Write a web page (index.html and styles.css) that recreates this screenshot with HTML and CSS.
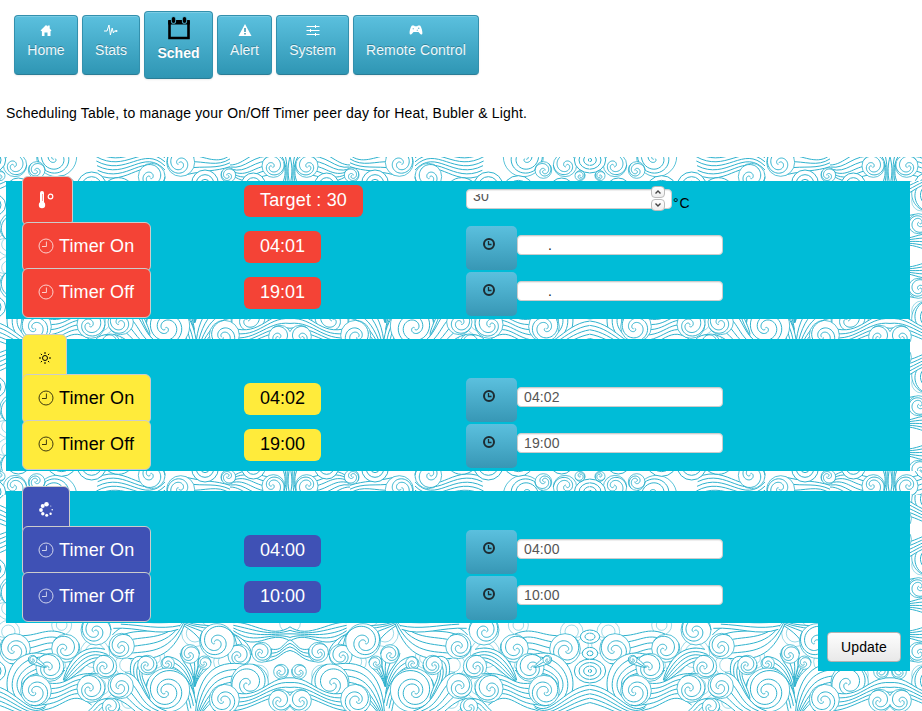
FILE: index.html
```html
<!DOCTYPE html>
<html lang="en">
<head>
<meta charset="utf-8">
<title>Scheduling Table</title>
<link rel="stylesheet" href="styles.css">
</head>
<body>
<svg class="symbols" width="0" height="0" aria-hidden="true">
  <symbol id="clock" viewBox="0 0 16 16"><circle cx="8" cy="8" r="7" fill="none" stroke="currentColor" stroke-width="1"/><path d="M8.4 3.5V8.5H4" fill="none" stroke="currentColor" stroke-width="1"/></symbol>
  <symbol id="time" viewBox="0 0 14 14"><circle cx="7" cy="7" r="5" fill="none" stroke="currentColor" stroke-width="2"/><path d="M6.5 4V7.5H9.5" fill="none" stroke="currentColor" stroke-width="1.3"/></symbol>
</svg>
<nav class="nav">
  <a class="btn home"><svg class="icon" viewBox="0 0 14 12"><path d="M1.500 6.500 7 1l1.700 1.500V1.400h2v3l1.800 2.100-1 .7V12H8.500V8.500h-3V12H2.900V7.200z" fill="currentColor"/></svg><span>Home</span></a>
  <a class="btn stats"><svg class="icon" viewBox="0 0 14 12"><path d="M0 7h3l2-6 1.4 10L8.2 4l1.2 5 1-2H12" fill="none" stroke="currentColor" stroke-width="1"/><circle cx="12.4" cy="7" r="1.1" fill="currentColor"/></svg><span>Stats</span></a>
  <a class="btn sched active"><svg class="icon" viewBox="0 0 24 24"><path d="M2.500 6h19v16h-19z" fill="none" stroke="#000" stroke-width="2.600"/><path d="M1.200 4h21.600v4.500H1.200z" fill="#000"/><path d="M6.500 2.800v2.400M17.500 2.800v2.400" stroke="#49a9c6" stroke-width="5.200" stroke-linecap="round"/><path d="M6.500 2.800v2.400M17.500 2.800v2.400" stroke="#000" stroke-width="3.400" stroke-linecap="round"/></svg><span>Sched</span></a>
  <a class="btn alert"><svg class="icon" viewBox="0 0 14 12"><path d="M7 0 13.500 12H.5z" fill="currentColor"/><path d="M7 4v4M7 9v1.500" stroke="#3594b2" stroke-width="1.500"/></svg><span>Alert</span></a>
  <a class="btn system"><svg class="icon" viewBox="0 0 14 12"><path d="M.5 2.500h13M.5 6.500h13M.5 10.500h13M9.500 1v3M4.500 5v3M9.500 9v3" fill="none" stroke="currentColor" stroke-width="1"/></svg><span>System</span></a>
  <a class="btn remote"><svg class="icon" viewBox="0 0 14 12"><path d="M3 1.500h2l.8.700h2.400l.8-.7h2c1.200 1 2.500 5 2.400 7.500 0 2-1.700 1.800-2.600.6L9.500 8h-5L3.200 9.600C2.300 10.800.6 11 .6 9 .5 6.500 1.800 2.500 3 1.500z" fill="currentColor"/><circle cx="4.300" cy="4.700" r=".8" fill="#8cc9de"/><circle cx="9.700" cy="4.200" r=".8" fill="#6bb8d2"/><circle cx="8.300" cy="6.200" r=".7" fill="#8cc9de"/></svg><span>Remote Control</span></a>
</nav>
<p class="intro">Scheduling Table, to manage your On/Off Timer peer day for Heat, Bubler &amp; Light.</p>
<main class="board">
  <svg class="waves" width="922" height="554" aria-hidden="true">
    <defs><g id="cell"></g><g id="strip"></g>
      <clipPath id="cellClip"><rect x="15" y="0" width="901" height="273"/></clipPath>
      <clipPath id="stripClip"><rect x="15" y="6" width="901" height="72"/></clipPath>
    </defs>
    <g id="tiles"></g>
  </svg>
  <div class="content">
    <section class="card red">
      <div class="row"><div><span class="tag"><svg class="thermo" viewBox="0 0 16 18"><path d="M3.500 2v10" stroke="currentColor" stroke-width="4" stroke-linecap="round"/><circle cx="3.500" cy="14" r="3.200" fill="currentColor"/><path d="M4 3v7" stroke="#f44336" stroke-width=".5"/><circle cx="12" cy="5.500" r="2.300" fill="none" stroke="currentColor" stroke-width="1.200"/></svg></span></div><div><span class="badge target">Target : 30</span></div><div class="field"><span class="input number"><span class="value">30</span><span class="spin"><i><svg viewBox="0 0 12 10"><path d="M3.500 6.500 6 4l2.500 2.500"/></svg></i><i><svg viewBox="0 0 12 10"><path d="M3.500 3.500 6 6l2.500-2.500"/></svg></i></span></span><span class="unit">°C</span></div></div>
      <div class="row"><div><span class="tag"><svg class="clock"><use href="#clock"/></svg>Timer On</span></div><div><span class="badge">04:01</span></div><div class="field"><span class="pick"><svg><use href="#time"/></svg></span><span class="input"><span class="value dot">.</span></span></div></div>
      <div class="row"><div><span class="tag"><svg class="clock"><use href="#clock"/></svg>Timer Off</span></div><div><span class="badge">19:01</span></div><div class="field"><span class="pick"><svg><use href="#time"/></svg></span><span class="input"><span class="value dot">.</span></span></div></div>
    </section>
    <section class="card yellow">
      <div class="row short"><div><span class="tag"><svg class="sun" viewBox="0 0 12 12"><circle cx="6" cy="6" r="2.500" fill="none" stroke="currentColor" stroke-width="1"/><path d="M6 0v2M6 10v2M0 6h2M10 6h2M1.800 1.800l1.200 1.200M9 9l1.200 1.200M1.800 10.200 3 9M9 3l1.200-1.200" stroke="currentColor" stroke-width="1"/></svg></span></div></div>
      <div class="row"><div><span class="tag"><svg class="clock"><use href="#clock"/></svg>Timer On</span></div><div><span class="badge">04:02</span></div><div class="field"><span class="pick"><svg><use href="#time"/></svg></span><span class="input"><span class="value">04:02</span></span></div></div>
      <div class="row"><div><span class="tag"><svg class="clock"><use href="#clock"/></svg>Timer Off</span></div><div><span class="badge">19:00</span></div><div class="field"><span class="pick"><svg><use href="#time"/></svg></span><span class="input"><span class="value">19:00</span></span></div></div>
    </section>
    <section class="card blue">
      <div class="row short"><div><span class="tag"><svg class="dots" viewBox="0 0 15 15" fill="currentColor"><circle cx="7.500" cy="2.300" r="2.300"/><circle cx="3.700" cy="4" r="2"/><circle cx="2" cy="8" r="1.900"/><circle cx="3.800" cy="11.800" r="1.700"/><circle cx="7.700" cy="13.300" r="1.500"/><circle cx="11.600" cy="11.800" r="1.200"/><circle cx="13.200" cy="7.800" r=".8"/><circle cx="11.800" cy="4" r=".5"/></svg></span></div></div>
      <div class="row"><div><span class="tag"><svg class="clock"><use href="#clock"/></svg>Timer On</span></div><div><span class="badge">04:00</span></div><div class="field"><span class="pick"><svg><use href="#time"/></svg></span><span class="input"><span class="value">04:00</span></span></div></div>
      <div class="row"><div><span class="tag"><svg class="clock"><use href="#clock"/></svg>Timer Off</span></div><div><span class="badge">10:00</span></div><div class="field"><span class="pick"><svg><use href="#time"/></svg></span><span class="input"><span class="value">10:00</span></span></div></div>
    </section>
    <div class="actions"><button class="update">Update</button></div>
  </div>
</main>
<script src="waves.js"></script>
</body>
</html>
```
FILE: styles.css
```css
* { box-sizing: border-box; }
body { margin: 0; font: 14px/20px "Liberation Sans", Arial, sans-serif; color: #000; background: #fff; overflow: hidden; }
.symbols { display: block; }
.nav { display: flex; align-items: center; gap: 4px; height: 68px; margin: 11px 0 0 14px; }
.btn { display: flex; flex-direction: column; align-items: center; height: 60px; padding-top: 8px; border: 1px solid #3390ad; border-bottom-color: #2b7d96; border-radius: 4px; background: linear-gradient(#5bc0de, #2f96b4); box-shadow: inset 0 1px 0 rgba(255,255,255,.2), 0 1px 2px rgba(0,0,0,.08); color: #fff; text-shadow: 0 -1px 0 rgba(0,0,0,.25); white-space: nowrap; }
.btn .icon { width: 14px; height: 12px; margin-bottom: 4px; }
.btn span { color: #eef8fb; }
.home { width: 64px; } .stats { width: 58px; } .alert { width: 55px; } .system { width: 73px; } .remote { width: 126px; letter-spacing: .15px; }
.btn.active { width: 69px; height: 68px; padding-top: 4px; font-weight: bold; }
.btn.active .icon { width: 24px; height: 24px; margin-bottom: 3px; }
.btn.active span { color: #fff; }
.intro { margin: 24px 0 0 6px; height: 54px; letter-spacing: .178px; }
.board { position: relative; height: 554px; }
.waves { position: absolute; left: 0; top: 0; display: block; }
.content { position: relative; padding: 24px 12px 0 6px; }
.card { background: #00bcd7; margin-bottom: 20px; padding-left: 16px; }
.card:nth-of-type(3) { margin-bottom: 0; }
.row { display: grid; grid-template-columns: 222px 222px 1fr; align-items: start; height: 46px; }
.row.short { height: 40px; }
.tag { display: inline-flex; align-items: center; height: 50px; margin-top: -5px; padding: 0 16px 2px; border: 1px solid #ccc; border-radius: 6px; font-size: 18px; letter-spacing: .12px; position: relative; white-space: nowrap; }
.row > div { display: flex; align-items: flex-start; }
.red .tag, .red .badge { background: #f44336; color: #fff; }
.yellow .tag, .yellow .badge { background: #ffeb3b; color: #000; }
.blue .tag, .blue .badge { background: #3f51b5; color: #fff; }
.tag .clock { width: 16px; height: 16px; margin-right: 5px; margin-left: -1px; opacity: .75; }
.thermo { width: 17px; height: 18px; margin-left: -1px; margin-right: 1px; }
.sun { width: 12px; height: 12px; margin-right: -1px; }
.dots { width: 15px; height: 15px; margin-top: -2px; }
.blue .row.short .tag { padding-right: 15px; }
.badge { height: 32px; margin-top: 4px; padding: 0 16px; border-radius: 6px; font-size: 18px; line-height: 31px; white-space: nowrap; }
.target { letter-spacing: .18px; }
.pick { width: 51px; height: 44px; margin-top: -1px; border-radius: 5px; background: linear-gradient(#5bc0de, #3797b5); }
.pick svg { display: block; width: 14px; height: 14px; margin: 11px 0 0 16px; color: #1d2b31; }
.input { position: relative; width: 206px; height: 20px; margin-top: 8px; padding: 4px 6px 0; border: 1px solid #ccc; border-radius: 4px; background: #fff; box-shadow: inset 0 1px 1px rgba(0,0,0,.075); }
.value { display: block; height: 14px; color: #555; line-height: 10px; letter-spacing: .1px; }
.value.dot { padding-left: 24px; color: #222; }
.number .value { overflow: hidden; line-height: 4px; height: 12px; width: 60px; }
.spin { position: absolute; left: 184px; top: -4px; display: grid; gap: 1px; }
.spin i { display: block; width: 14px; height: 12px; border: 1px solid #bbb; border-radius: 4px; background: linear-gradient(#fff, #eee); }
.spin svg { display: block; width: 12px; height: 10px; fill: none; stroke: #444; stroke-width: 1.4; }
.unit { margin: 12px 0 0 1px; letter-spacing: .8px; }
.actions { width: 92px; height: 48px; margin-left: auto; padding: 9px; background: #00bcd7; }
.update { display: block; width: 74px; height: 30px; padding: 0; border: 1px solid #b3b3b3; border-radius: 4px; background: linear-gradient(#fdfdfd, #e9e9e9); font: 14px "Liberation Sans", Arial, sans-serif; letter-spacing: .15px; color: #000; }
```
FILE: waves.js
```js
// Line-art waves, built at three times their drawn size.
const INK = '#2fb2ce';
function add(out, d, fill, width) {
  out.push('<path d="' + d + '" fill="' + (fill || 'none') + '" stroke="' + INK + '" stroke-width="' + (width || 3) + '"/>');
}
function curl(out, cx, cy, r, angle, dir, turns) {
  out.push('<circle cx="' + cx + '" cy="' + cy + '" r="' + r + '" fill="#fff" stroke="' + INK + '" stroke-width="2.4"/>');
  for (let k = 0; k < 2; k++) {
    let d = '';
    for (let i = 0; i <= 60; i++) {
      const t = i / 60;
      const a = (angle + k * 130) * Math.PI / 180 + dir * t * turns * 0.72 * 2 * Math.PI;
      const q = 2 + (r - 2) * (1 - t);
      const ox = r * 0.12 * t, oy = r * 0.1 * t;
      d += (i ? 'L' : 'M') + (cx + ox + q * Math.cos(a)).toFixed(1) + ' ' + (cy + oy + q * Math.sin(a)).toFixed(1);
    }
    add(out, d);
  }
}
// a and b are chains: start point followed by cubic control triples.
function band(out, a, b, n) {
  const pathOf = p => 'M' + p[0] + ' ' + p[1] + 'C' + p.slice(2).join(' ');
  const back = [];
  for (let i = b.length - 2; i >= 0; i -= 2) back.push(b[i], b[i + 1]);
  out.push('<path d="' + pathOf(a) + 'L' + back[0] + ' ' + back[1] + 'C' + back.slice(2).join(' ') + 'Z" fill="#fff"/>');
  n = n > 3 ? n - 1 : n;
  for (let i = 0; i <= n; i++) {
    const t = i / n;
    add(out, pathOf(a.map((v, j) => +(v + (b[j] - v) * t).toFixed(1))));
  }
}
function rings(out, cx, cy, rx, ry) {
  for (let r = rx; r > 4; r -= 14) out.push('<ellipse cx="' + cx + '" cy="' + cy + '" rx="' + r + '" ry="' + r * ry / rx + '" fill="#fff" stroke="' + INK + '" stroke-width="3"/>');
}
const c = ['<rect width="930" height="273" fill="#fff"/>'];
[[20,10,26],[110,165,30],[210,125,34],[420,115,30],[505,135,35],[600,100,44],[660,130,30],[860,35,34],[885,75,25],[500,245,34],[585,195,45],[700,15,30],[300,40,40]].forEach(p => {
  for (let r = p[2]; r > 14; r -= 14) c.push('<circle cx="' + p[0] + '" cy="' + p[1] + '" r="' + r + '" fill="none" stroke="' + INK + '" stroke-width="1.4"/>');
});
band(c, [0,8, 60,70, 130,0, 185,8], [0,75, 70,10, 110,110, 185,40], 5);
band(c, [0,55, 40,60, 30,100, 80,85], [0,90, 45,90, 40,120, 90,125], 3);
curl(c, 100, 97, 30, 200, -1, 1.6);
band(c, [178,45, 150,60, 132,80, 130,105], [185,45, 190,70, 190,80, 200,110], 4);
curl(c, 167, 107, 34, 180, -1, 1.6);
band(c, [182,50, 195,0, 290,30, 335,0], [285,60, 290,50, 310,30, 345,10], 3);
curl(c, 234, 63, 52, 200, 1, 1.8);
band(c, [548,45, 500,-15, 420,40, 350,0], [500,115, 430,120, 370,120, 330,10], 6);
curl(c, 520, 78, 38, 230, 1, 1.6);
band(c, [340,5, 400,10, 450,10, 500,0], [350,28, 410,50, 470,20, 545,25], 2);
curl(c, 597, 30, 45, 180, 1, 1.7);
band(c, [690,42, 750,15, 780,60, 850,43], [690,125, 735,75, 760,130, 840,130], 5);
curl(c, 688, 85, 42, 200, -1, 1.6);
curl(c, 840, 87, 46, 300, 1, 1.7);
band(c, [570,88, 640,70, 680,120, 695,180], [540,150, 600,80, 640,160, 690,185], 5);
curl(c, 570, 140, 35, 160, -1, 1.6);
band(c, [740,105, 870,65, 905,240, 810,272], [690,150, 720,190, 840,130, 780,210], 6);
curl(c, 735, 142, 42, 180, -1, 1.7);
band(c, [745,142, 760,128, 770,112, 785,110], [750,143, 770,138, 790,132, 797,128], 2);
curl(c, 787, 119, 13, 200, 1, 1.2);
band(c, [590,162, 690,150, 670,215, 775,180], [610,255, 680,200, 690,275, 785,272], 6);
curl(c, 612, 205, 42, 180, -1, 1.7);
curl(c, 777, 212, 46, 300, 1, 1.8);
band(c, [130,138, 230,110, 290,155, 298,273], [100,215, 170,245, 190,170, 275,273], 6);
curl(c, 136, 188, 56, 260, -1, 1.8);
band(c, [0,175, 80,160, 100,245, 190,215], [0,235, 80,210, 120,273, 200,273], 5);
curl(c, 45, 242, 34, 180, -1, 1.5);
curl(c, 212, 238, 45, 270, 1, 1.8);
band(c, [300,80, 275,120, 300,150, 302,200], [345,100, 335,140, 305,145, 302,200], 4);
curl(c, 315, 102, 28, 180, 1, 1.4);
band(c, [255,130, 260,155, 285,150, 300,200], [290,125, 285,140, 300,160, 302,200], 3);
curl(c, 272, 128, 20, 180, 1, 1.3);
band(c, [385,110, 340,110, 310,160, 302,220], [395,150, 350,150, 330,180, 302,230], 4);
curl(c, 382, 130, 20, 270, 1, 1.3);
band(c, [297,250, 310,170, 350,150, 390,150], [320,273, 330,230, 325,230, 345,200], 4);
curl(c, 382, 210, 66, 200, 1, 2.4);
band(c, [450,112, 510,90, 510,190, 440,245], [450,150, 475,160, 440,200, 435,235], 5);
curl(c, 443, 135, 29, 180, -1, 1.5);
band(c, [510,158, 450,165, 465,250, 385,273], [545,235, 520,240, 500,255, 480,273], 5);
curl(c, 523, 198, 38, 260, 1, 1.6);
band(c, [555,235, 600,235, 600,260, 620,273], [555,273, 570,265, 575,270, 580,280], 3);
curl(c, 552, 260, 26, 180, -1, 1.3);
curl(c, 42, 155, 22, 200, -1, 1.3);
band(c, [745,255, 800,300, 840,190, 930,195], [760,285, 820,300, 860,255, 930,245], 5);
rings(c, 916, 153, 48, 36);
rings(c, 916, 50, 30, 20);
rings(c, 916, 100, 24, 18);

const s = ['<rect width="930" height="90" fill="#fff"/>'];
band(s, [15,5, 20,25, 25,50, 15,90], [60,-10, 30,20, 20,50, 40,90], 4);
band(s, [60,-10, 130,-20, 150,30, 195,30], [70,60, 120,60, 130,100, 190,60], 6);
rings(s, 125, 90, 36, 36);
curl(s, 65, 33, 34, 200, -1, 1.6);
curl(s, 200, 60, 22, 200, 1, 1.4);
band(s, [195,0, 230,30, 270,5, 310,0], [195,35, 240,50, 270,45, 330,60], 4);
rings(s, 270, 85, 40, 40);
curl(s, 343, 22, 42, 200, 1, 1.7);
band(s, [390,8, 460,-45, 510,45, 600,-10], [390,70, 450,-10, 500,100, 590,60], 6);
curl(s, 430, 65, 40, 180, -1, 1.6);
rings(s, 530, 118, 50, 50);
rings(s, 610, 95, 44, 44);
curl(s, 715, 5, 60, 200, 1, 2.2);
rings(s, 700, 110, 48, 48);
curl(s, 840, 30, 35, 180, -1, 1.6);
curl(s, 775, 45, 25, 180, 1, 1.5);
rings(s, 830, 105, 36, 36);
rings(s, 916, 15, 48, 39);
curl(s, 885, 62, 15, 200, 1, 1.2);

document.getElementById('cell').innerHTML = '<g clip-path="url(#cellClip)">' + c.join('') + '</g>';
document.getElementById('strip').innerHTML = '<g clip-path="url(#stripClip)">' + s.join('') + '</g>';
const tiles = [];
// Columns alternate with their mirror image about x = 290, 590 and 890.
const columns = [[295, -1], [285, 1], [895, -1], [885, 1]];
function place(id, y, flip) {
  columns.forEach(([x, sx]) => tiles.push('<use href="#' + id + '" transform="translate(' + x + ' ' + y + ') scale(' + sx / 3 + ' ' + flip / 3 + ')"/>'));
}
for (let i = 0; i < 7; i++) {
  const top = 463 - i * 91;
  place('cell', i % 2 ? top + 91 : top, i % 2 ? -1 : 1);
}
place('strip', -2, 1);
place('strip', 340, -1);
document.getElementById('tiles').innerHTML = tiles.join('');
```
